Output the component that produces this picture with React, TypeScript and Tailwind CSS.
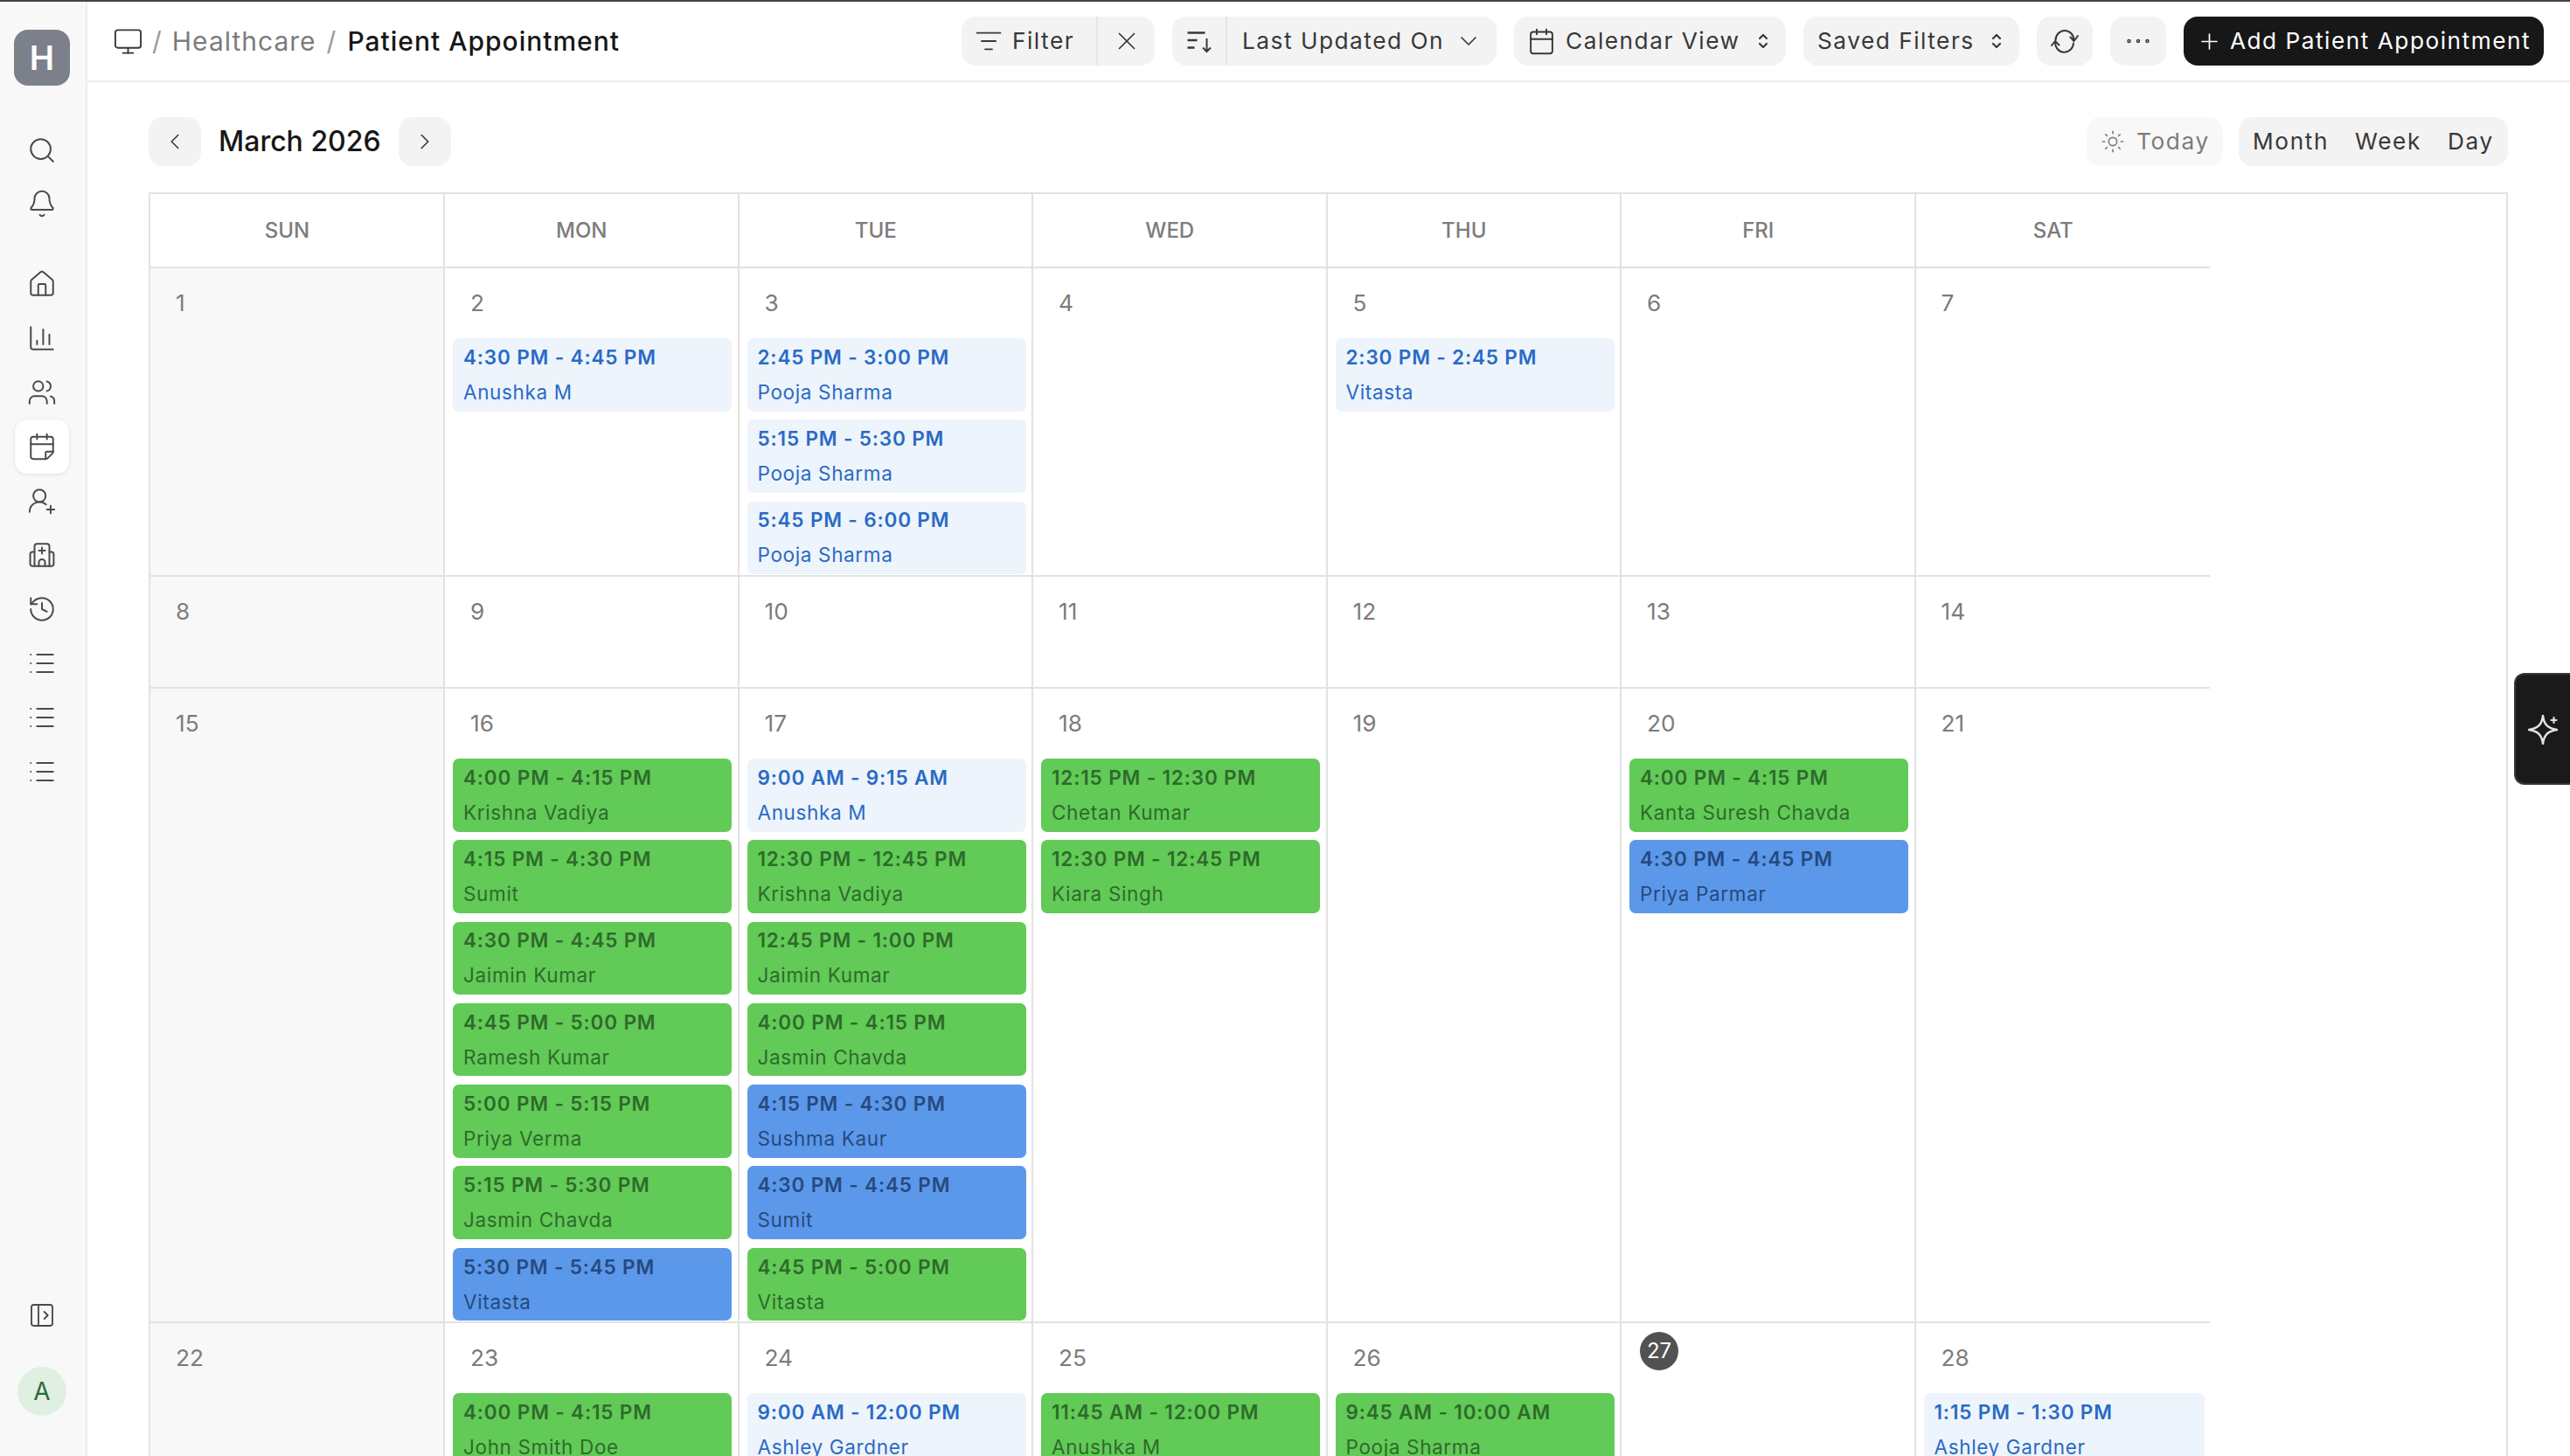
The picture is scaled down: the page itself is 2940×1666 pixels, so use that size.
import {
  Bell,
  Calendar,
  CalendarFold,
  ChartColumn,
  ChevronDown,
  ChevronLeft,
  ChevronRight,
  Ellipsis,
  History,
  House,
  List,
  ListFilter,
  Monitor,
  PanelLeftOpen,
  Plus,
  Search,
  Sun,
  UserRoundPlus,
  Users,
  X,
} from "lucide-react";

type Tone = "light" | "green" | "blue";
type Appt = { time: string; name: string; tone: Tone };
type Day = { date: number; appts?: Appt[] };

const a = (time: string, name: string, tone: Tone): Appt => ({ time, name, tone });

const weeks: { height: string; days: Day[] }[] = [
  {
    height: "h-[353px]",
    days: [
      { date: 1 },
      { date: 2, appts: [a("4:30 PM - 4:45 PM", "Anushka M", "light")] },
      {
        date: 3,
        appts: [
          a("2:45 PM - 3:00 PM", "Pooja Sharma", "light"),
          a("5:15 PM - 5:30 PM", "Pooja Sharma", "light"),
          a("5:45 PM - 6:00 PM", "Pooja Sharma", "light"),
        ],
      },
      { date: 4 },
      { date: 5, appts: [a("2:30 PM - 2:45 PM", "Vitasta", "light")] },
      { date: 6 },
      { date: 7 },
    ],
  },
  {
    height: "h-[128px]",
    days: [
      { date: 8 },
      { date: 9 },
      { date: 10 },
      { date: 11 },
      { date: 12 },
      { date: 13 },
      { date: 14 },
    ],
  },
  {
    height: "h-[726px]",
    days: [
      { date: 15 },
      {
        date: 16,
        appts: [
          a("4:00 PM - 4:15 PM", "Krishna Vadiya", "green"),
          a("4:15 PM - 4:30 PM", "Sumit", "green"),
          a("4:30 PM - 4:45 PM", "Jaimin Kumar", "green"),
          a("4:45 PM - 5:00 PM", "Ramesh Kumar", "green"),
          a("5:00 PM - 5:15 PM", "Priya Verma", "green"),
          a("5:15 PM - 5:30 PM", "Jasmin Chavda", "green"),
          a("5:30 PM - 5:45 PM", "Vitasta", "blue"),
        ],
      },
      {
        date: 17,
        appts: [
          a("9:00 AM - 9:15 AM", "Anushka M", "light"),
          a("12:30 PM - 12:45 PM", "Krishna Vadiya", "green"),
          a("12:45 PM - 1:00 PM", "Jaimin Kumar", "green"),
          a("4:00 PM - 4:15 PM", "Jasmin Chavda", "green"),
          a("4:15 PM - 4:30 PM", "Sushma Kaur", "blue"),
          a("4:30 PM - 4:45 PM", "Sumit", "blue"),
          a("4:45 PM - 5:00 PM", "Vitasta", "green"),
        ],
      },
      {
        date: 18,
        appts: [
          a("12:15 PM - 12:30 PM", "Chetan Kumar", "green"),
          a("12:30 PM - 12:45 PM", "Kiara Singh", "green"),
        ],
      },
      { date: 19 },
      {
        date: 20,
        appts: [
          a("4:00 PM - 4:15 PM", "Kanta Suresh Chavda", "green"),
          a("4:30 PM - 4:45 PM", "Priya Parmar", "blue"),
        ],
      },
      { date: 21 },
    ],
  },
  {
    height: "h-[200px]",
    days: [
      { date: 22 },
      { date: 23, appts: [a("4:00 PM - 4:15 PM", "John Smith Doe", "green")] },
      { date: 24, appts: [a("9:00 AM - 12:00 PM", "Ashley Gardner", "light")] },
      { date: 25, appts: [a("11:45 AM - 12:00 PM", "Anushka M", "green")] },
      { date: 26, appts: [a("9:45 AM - 10:00 AM", "Pooja Sharma", "green")] },
      { date: 27 },
      { date: 28, appts: [a("1:15 PM - 1:30 PM", "Ashley Gardner", "light")] },
    ],
  },
];

const toneClass: Record<Tone, string> = {
  light: "bg-[#edf4fb] text-[#2a6ac6]",
  green: "bg-[#62ca57] text-[#2e6b2b]",
  blue: "bg-[#5b98e9] text-[#264a80]",
};

const navIcon = "w-[34px] h-[34px] text-[#4a4a4a]";

const HospitalIcon = () => (
  <svg viewBox="0 0 24 24" className={navIcon} fill="none" stroke="currentColor" strokeWidth="1.4" strokeLinecap="round" strokeLinejoin="round">
    <path d="M6 21V5a2 2 0 0 1 2-2h8a2 2 0 0 1 2 2v16" />
    <path d="M6 9.500H4.500a2 2 0 0 0-2 2V19a2 2 0 0 0 2 2h15a2 2 0 0 0 2-2v-7.500a2 2 0 0 0-2-2H18" />
    <path d="M12 6v5M9.500 8.500h5" />
    <path d="M9.500 21v-3a2.500 2.500 0 0 1 5 0v3" />
  </svg>
);

const Sidebar = () => (
  <div className="w-[100px] shrink-0 h-full bg-[#f8f8f8] border-r-2 border-[#ededed] flex flex-col items-center pr-[2px]">
    <div className="mt-[32px] w-[64px] h-[64px] rounded-[16px] bg-[#7c808a] text-white text-[38px] font-semibold flex items-center justify-center">
      H
    </div>
    <div className="mt-[57px] flex flex-col items-center gap-[27px]">
      <Search className={navIcon} strokeWidth={1.4} />
      <Bell className={navIcon} strokeWidth={1.4} />
    </div>
    <div className="mt-[44px] flex flex-col items-center w-full">
      <NavItem><House className={navIcon} strokeWidth={1.4} /></NavItem>
      <NavItem><ChartColumn className={navIcon} strokeWidth={1.4} /></NavItem>
      <NavItem><Users className={navIcon} strokeWidth={1.4} /></NavItem>
      <NavItem active><CalendarFold className={navIcon} strokeWidth={1.4} /></NavItem>
      <NavItem><UserRoundPlus className={navIcon} strokeWidth={1.4} /></NavItem>
      <NavItem><HospitalIcon /></NavItem>
      <NavItem><History className={navIcon} strokeWidth={1.4} /></NavItem>
      <NavItem><List className={navIcon} strokeWidth={1.4} /></NavItem>
      <NavItem><List className={navIcon} strokeWidth={1.4} /></NavItem>
      <NavItem><List className={navIcon} strokeWidth={1.4} /></NavItem>
    </div>
    <div className="mt-auto mb-[46px] flex flex-col items-center">
      <PanelLeftOpen className="w-[32px] h-[32px] text-[#4a4a4a]" strokeWidth={1.4} />
      <div className="mt-[43px] w-[56px] h-[56px] rounded-full bg-[#dff0e3] text-[#2d6a3f] text-[28px] flex items-center justify-center">
        A
      </div>
    </div>
  </div>
);

const NavItem = ({ children, active }: { children: React.ReactNode; active?: boolean }) => (
  <div
    className={`w-[62px] h-[62px] rounded-[14px] flex items-center justify-center ${
      active ? "bg-white shadow-[0_1px_4px_rgba(0,0,0,0.1)]" : ""
    }`}
  >
    {children}
  </div>
);

const SortIcon = () => (
  <svg viewBox="0 0 30 30" className="w-[30px] h-[30px]" fill="none" stroke="#383838" strokeWidth="2.6">
    <path d="M1.500 5.500h20M1.500 14h11M1.500 22.500h8" />
    <path d="M23.500 12v15M19 22.500l4.500 4.500 4.500-4.500" strokeWidth="2" />
  </svg>
);

const UpDownIcon = () => (
  <svg viewBox="0 0 14 24" className="w-[14px] h-[24px] ml-auto" fill="none" stroke="#383838" strokeWidth="2.200" strokeLinecap="round" strokeLinejoin="round">
    <path d="M3 9l4-4 4 4M3 15l4 4 4-4" />
  </svg>
);

const RefreshIcon = () => (
  <svg viewBox="-16 -14 32 28" className="w-[32px] h-[28px]" fill="none" stroke="#383838" strokeWidth="2" strokeLinecap="round" strokeLinejoin="round">
    <path d="M-10.500 -1A10.500 11 0 0 1 10.500 -1" />
    <path d="M6.500 -4.500L10.500 0L15 -6" />
    <path d="M10 2.500A10.500 11 0 0 1 -11 1" />
    <path d="M-15 5L-11 0L-6.500 4.500" />
  </svg>
);

const Pill = ({ children, className = "" }: { children: React.ReactNode; className?: string }) => (
  <div className={`h-[56px] rounded-[16px] bg-[#f3f3f3] flex items-center text-[#383838] ${className}`}>{children}</div>
);

const Header = () => (
  <div className="h-[92px] shrink-0 border-b-2 border-[#ededed] flex items-center justify-between pr-[30px] pl-[29px] text-[26.25px] tracking-[1.5px]">
    <div className="flex items-center text-[30px] tracking-[1px]">
      <Monitor className="w-[35px] h-[35px] text-[#383838]" strokeWidth={1.3} />
      <span className="text-[#9a9a9a] ml-[10px]">/</span>
      <span className="text-[#7c7c7c] ml-[11px]">Healthcare</span>
      <span className="text-[#9a9a9a] ml-[12px]">/</span>
      <span className="text-[#171717] font-medium ml-[12px]">Patient Appointment</span>
    </div>
    <div className="flex items-center gap-[20px]">
      <Pill className="w-[221px]">
        <div className="w-[156px] h-full flex items-center pl-[15px] gap-[11px] border-r-2 border-[#e6e6e6]">
          <ListFilter className="w-[32px] h-[32px]" strokeWidth={1.4} />
          <span>Filter</span>
        </div>
        <div className="flex-1 flex justify-center">
          <X className="w-[34px] h-[34px]" strokeWidth={1.2} />
        </div>
      </Pill>
      <Pill className="w-[371px]">
        <div className="w-[63px] h-full flex items-center justify-center border-r-2 border-[#e6e6e6]">
          <SortIcon />
        </div>
        <span className="ml-[17px]">Last Updated On</span>
        <ChevronDown className="w-[32px] h-[32px] ml-[12px]" strokeWidth={1.3} />
      </Pill>
      <Pill className="w-[311px] pl-[15px] pr-[19px]">
        <Calendar className="w-[33px] h-[33px]" strokeWidth={1.4} />
        <span className="ml-[11px]">Calendar View</span>
        <UpDownIcon />
      </Pill>
      <Pill className="w-[247px] pl-[16px] pr-[19px]">
        <span>Saved Filters</span>
        <UpDownIcon />
      </Pill>
      <Pill className="w-[64px] justify-center">
        <RefreshIcon />
      </Pill>
      <Pill className="w-[64px] justify-center">
        <Ellipsis className="w-[36px] h-[36px]" strokeWidth={1} />
      </Pill>
      <div className="w-[412px] h-[56px] rounded-[16px] bg-[#171717] text-white flex items-center justify-center gap-[9px]">
        <Plus className="w-[29px] h-[29px]" strokeWidth={1.4} />
        <span>Add Patient Appointment</span>
      </div>
    </div>
  </div>
);

const Toolbar = () => (
  <div className="h-[56px] flex items-center justify-between text-[26.25px] tracking-[1.6px]">
    <div className="flex items-center">
      <div className="w-[60px] h-[56px] rounded-[16px] bg-[#f3f3f3] flex items-center justify-center">
        <ChevronLeft className="w-[30px] h-[30px] text-[#383838]" strokeWidth={1.3} />
      </div>
      <div className="ml-[20px] text-[32px] tracking-normal font-medium text-[#171717]">March 2026</div>
      <div className="ml-[20px] w-[60px] h-[56px] rounded-[16px] bg-[#f3f3f3] flex items-center justify-center">
        <ChevronRight className="w-[30px] h-[30px] text-[#383838]" strokeWidth={1.3} />
      </div>
    </div>
    <div className="flex items-center gap-[18px]">
      <div className="w-[156px] h-[56px] rounded-[16px] bg-[#f8f8f8] text-[#7c7c7c] flex items-center pl-[16px] gap-[13px]">
        <Sun className="w-[28px] h-[28px]" strokeWidth={1.4} />
        <span>Today</span>
      </div>
      <div className="w-[308px] h-[56px] rounded-[16px] bg-[#f3f3f3] text-[#383838] flex items-center pl-[16px] gap-[30px]">
        <span>Month</span>
        <span>Week</span>
        <span>Day</span>
      </div>
    </div>
  </div>
);

const ApptCard = ({ appt }: { appt: Appt }) => (
  <div
    className={`h-[83.5px] shrink-0 rounded-[7px] pl-[12px] flex flex-col justify-center gap-[8px] text-[22.5px] leading-[32px] ${toneClass[appt.tone]}`}
  >
    <div className="font-semibold tracking-[0.85px]">{appt.time}</div>
    <div className="tracking-[0.65px]">{appt.name}</div>
  </div>
);

const DayCell = ({ day, index }: { day: Day; index: number }) => (
  <div className={`min-w-0 h-full overflow-hidden border-b-2 border-[#e2e2e2] ${index < 6 ? "border-r-2" : ""} ${index === 0 ? "bg-[#f8f8f8]" : "bg-white"}`}>
    <div className="h-[80px] pl-[22px]">
      {day.date === 27 ? (
        <div className="mt-[10px] -ml-[1px] w-[44px] h-[44px] rounded-full bg-[#525252] text-white text-[24px] flex items-center justify-center">
          27
        </div>
      ) : (
        <div className="pt-[24px] pl-[7px] text-[26.25px] leading-[32px] text-[#7c7c7c]">{day.date}</div>
      )}
    </div>
    {day.appts && (
      <div className="pl-[9px] pr-[6.5px] flex flex-col gap-[9.8px]">
        {day.appts.map((appt, i) => (
          <ApptCard key={i} appt={appt} />
        ))}
      </div>
    )}
  </div>
);

const CalendarGrid = () => (
  <div className="mt-[30px] flex-1 border-2 border-b-0 border-[#e2e2e2] overflow-hidden">
    <div className="w-[2356px]">
      <div className="grid grid-cols-[337px_repeat(6,336.5px)] h-[85px] border-b-2 border-[#e2e2e2]">
        {["SUN", "MON", "TUE", "WED", "THU", "FRI", "SAT"].map((d, i) => (
          <div
            key={d}
            className={`flex items-center justify-center pr-[22px] text-[24px] font-medium text-[#7c7c7c] ${i < 6 ? "border-r-2 border-[#e2e2e2]" : ""}`}
          >
            {d}
          </div>
        ))}
      </div>
      {weeks.map((week) => (
        <div key={week.days[0].date} className={`grid grid-cols-[337px_repeat(6,336.5px)] ${week.height}`}>
          {week.days.map((day, i) => (
            <DayCell key={day.date} day={day} index={i} />
          ))}
        </div>
      ))}
    </div>
  </div>
);

const App = () => (
  <div className="relative w-[2940px] h-[1666px] overflow-hidden bg-white font-['Inter',sans-serif] flex flex-col">
    <div className="h-[2px] shrink-0 bg-[#444444]" />
    <div className="flex-1 min-h-0 flex">
      <Sidebar />
      <div className="flex-1 min-w-0 flex flex-col">
        <Header />
        <div className="flex-1 min-h-0 flex flex-col pt-[40px] pl-[70px] pr-[71px]">
          <Toolbar />
          <CalendarGrid />
        </div>
      </div>
    </div>
    <div className="absolute right-0 top-[770px] w-[64px] h-[128px] rounded-l-[12px] bg-[#1a1a1a] border-2 border-r-0 border-[#383838] flex items-center pl-[14px]">
      <svg viewBox="0 0 36 36" className="w-[36px] h-[36px]" fill="none" stroke="#e2e2e2" strokeWidth="2.4" strokeLinecap="round" strokeLinejoin="round">
        <path d="M17 3C18.200 13 22.500 17.500 33 19C22.500 20.500 18.200 25 17 35C15.800 25 11.500 20.500 1 19C11.500 17.500 15.800 13 17 3z" />
        <path d="M29.500 5v6M26.500 8h6" strokeWidth="2.2" />
      </svg>
    </div>
  </div>
);

export default App;
